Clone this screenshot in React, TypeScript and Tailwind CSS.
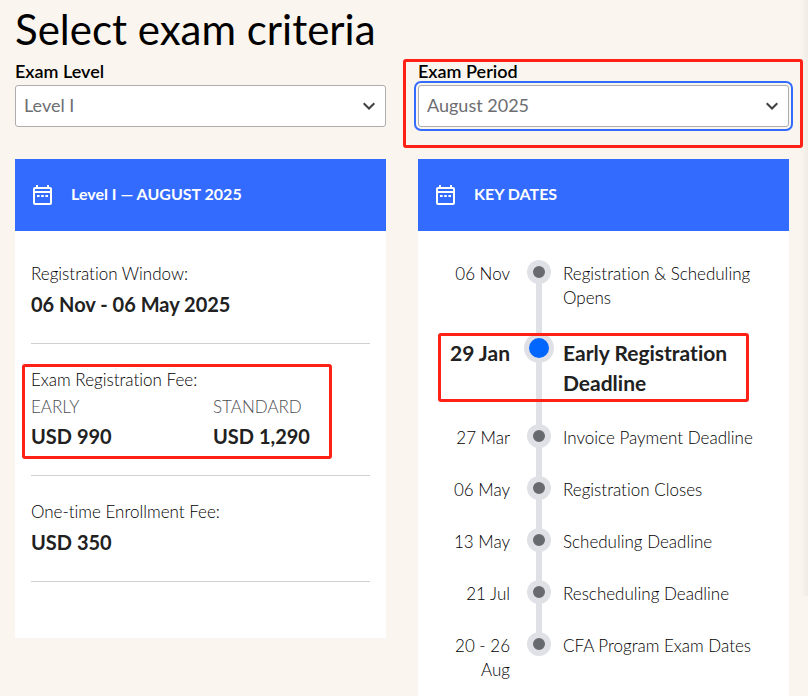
import { useState } from "react";

const levels = ["Level I", "Level II", "Level III"];
const periods = ["May 2025", "August 2025", "November 2025"];

const keyDates = [
  { date: "06 Nov", label: "Registration & Scheduling Opens" },
  { date: "29 Jan", label: "Early Registration Deadline", active: true },
  { date: "27 Mar", label: "Invoice Payment Deadline" },
  { date: "06 May", label: "Registration Closes" },
  { date: "13 May", label: "Scheduling Deadline" },
  { date: "21 Jul", label: "Rescheduling Deadline" },
  { date: "20 - 26 Aug", label: "CFA Program Exam Dates" },
];

const CalendarIcon = () => (
  <svg className="h-6 w-6 shrink-0" viewBox="0 0 24 24" fill="none" stroke="currentColor" strokeWidth="2" aria-hidden="true">
    <rect x="3" y="5" width="17" height="16" rx="1" />
    <path d="M3 9h17M6 2v3M17 2v3" />
    <path d="M6 13h2.6M10.2 13h2.6M14.4 13h2.6" />
  </svg>
);

// Red marker drawn over the content it highlights
const Highlight = ({ className }: { className: string }) => (
  <div className={`pointer-events-none absolute z-10 rounded-[3px] border-3 border-[#ff2116] ${className}`} />
);

const SelectField = ({
  id,
  label,
  value,
  options,
  onChange,
  active,
}: {
  id: string;
  label: string;
  value: string;
  options: string[];
  onChange: (value: string) => void;
  active?: boolean;
}) => (
  <div className="relative">
    <label htmlFor={id} className="block text-lg leading-6 font-semibold text-black">
      {label}
    </label>
    <div className="relative mt-0.5">
      <select
        id={id}
        value={value}
        onChange={(e) => onChange(e.target.value)}
        className={`block h-[42px] w-full appearance-none rounded-[3px] border border-[#adadad] bg-white pr-10 pb-0.5 pl-2 text-lg text-[#6d6e71] ${
          active ? "outline-2 outline-offset-2 outline-[#336bff]" : "outline-none"
        }`}
      >
        {options.map((option) => (
          <option key={option}>{option}</option>
        ))}
      </select>
      <svg
        className="pointer-events-none absolute top-[15px] right-[11px] h-3 w-3 text-[#414042]"
        viewBox="0 0 12 12"
        fill="none"
        stroke="currentColor"
        strokeWidth="2"
        aria-hidden="true"
      >
        <path d="M0.7 3.2L6 8.5l5.3-5.3" />
      </svg>
    </div>
    {active && <Highlight className="top-0 -right-[14px] -bottom-[21px] -left-[15px]" />}
  </div>
);

const CardHeader = ({ title }: { title: string }) => (
  <div className="flex h-[72px] items-center gap-4 bg-[#336bff] px-4 text-white">
    <CalendarIcon />
    <h2 className="pb-0.5 text-base font-bold">{title}</h2>
  </div>
);

export default function App() {
  const [level, setLevel] = useState("Level I");
  const [period, setPeriod] = useState("August 2025");

  return (
    <main className="relative flex min-h-screen flex-col bg-[#faf5ef] pr-[19px] pl-[15px] font-['Lato',sans-serif] text-[17px] leading-6 font-light text-black [font-variant-ligatures:none]">
      {/* Soft shade along the right edge */}
      <div className="pointer-events-none absolute top-0 right-0 h-[596px] w-2 bg-linear-to-r from-transparent to-black/4" />

      <h1 className="pt-0.5 pb-[3px] text-[42px] leading-[54px] font-normal text-black">Select exam criteria</h1>

      <div className="grid grid-cols-2 gap-8 font-normal">
        <SelectField id="level" label="Exam Level" value={level} options={levels} onChange={setLevel} />
        <SelectField id="period" label="Exam Period" value={period} options={periods} onChange={setPeriod} active />
      </div>

      <div className="mt-8 grid flex-1 grid-cols-2 gap-8">
        <section className="self-start bg-white pb-14">
          <CardHeader title={`${level} — ${period.toUpperCase()}`} />
          <div className="px-4 pt-[7px]">
            <div className="border-b border-[#d1d1d1] py-6">
              <p>Registration Window:</p>
              <p className="mt-[3px] text-xl leading-[30px] font-bold text-[#212121]">06 Nov - 06 May 2025</p>
            </div>
            <div className="relative border-b border-[#d1d1d1] py-6">
              <p>Exam Registration Fee:</p>
              <div className="mt-[3px] flex">
                <div className="w-[182px]">
                  <p className="text-[#4d4e51]">EARLY</p>
                  <p className="mt-0.5 text-xl leading-[30px] font-bold text-[#212121]">USD 990</p>
                </div>
                <div>
                  <p className="text-[#4d4e51]">STANDARD</p>
                  <p className="mt-0.5 text-xl leading-[30px] font-bold text-[#212121]">USD 1,290</p>
                </div>
              </div>
              <Highlight className="top-5 bottom-4 -left-[9px] w-[310px]" />
            </div>
            <div className="border-b border-[#d1d1d1] py-6">
              <p>One-time Enrollment Fee:</p>
              <p className="mt-[3px] text-xl leading-[30px] font-bold text-[#212121]">USD 350</p>
            </div>
          </div>
        </section>

        <section className="bg-white">
          <CardHeader title="KEY DATES" />
          <ol className="px-4 pt-[29px]">
            {keyDates.map((item, i) => (
              <li key={item.date} className="relative flex">
                <p
                  className={`w-[76px] shrink-0 pt-0.5 text-right ${
                    item.active ? "text-[21px] leading-[30px] font-bold text-[#212121]" : ""
                  }`}
                >
                  {item.date}
                </p>
                <div className="relative mr-[9px] ml-3.5 flex w-[30px] shrink-0 justify-center">
                  {i < keyDates.length - 1 && <span className="absolute top-3 -bottom-3 w-1.5 bg-[#e0e1e6]" />}
                  {item.active ? (
                    <span className="absolute -top-[3px] z-[1] h-[30px] w-[30px] rounded-full border-[5px] border-[#e0e1e6] bg-[#0066ff]" />
                  ) : (
                    <span className="relative z-[1] h-6 w-6 rounded-full border-6 border-[#e0e1e6] bg-[#676a6e]" />
                  )}
                </div>
                <p className={`pt-0.5 pb-[26px] ${item.active ? "text-[21px] leading-[30px] font-bold text-[#212121]" : ""}`}>
                  {item.label}
                </p>
                {item.active && <Highlight className="-top-[3px] bottom-[22px] left-1 w-[311px]" />}
              </li>
            ))}
          </ol>
        </section>
      </div>
    </main>
  );
}
